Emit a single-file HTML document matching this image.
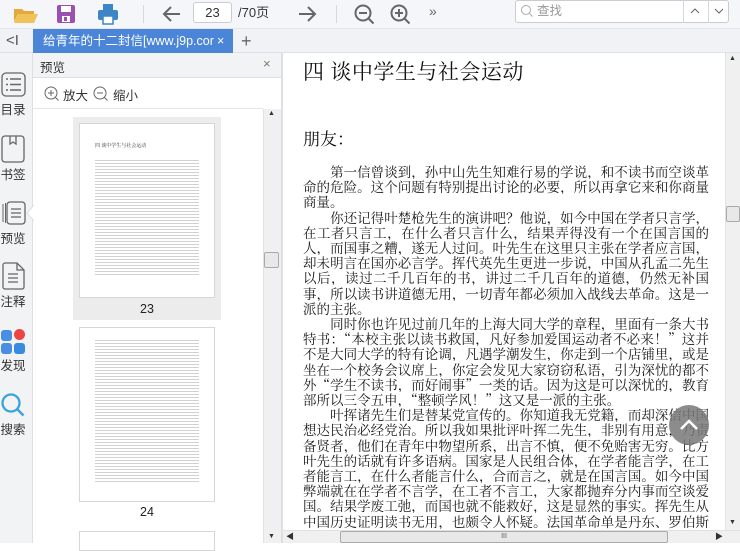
<!DOCTYPE html>
<html><head><meta charset="utf-8"><style>
*{margin:0;padding:0;box-sizing:border-box}
body{width:740px;height:543px;overflow:hidden;background:#fff;font-family:"Liberation Sans","Noto Sans CJK SC",sans-serif;position:relative}
.a{position:absolute}
.tb{left:0;top:0;width:740px;height:29px;background:#f4f6f9;border-bottom:1px solid #e3e6ea}
.tabbar{left:0;top:29px;width:740px;height:24px;background:#f0f2f5;border-bottom:1px solid #dde0e4}
.side{left:0;top:53px;width:33px;height:490px;background:#f2f3f5;border-right:1px solid #dcdfe3}
.lbl{font-size:12.5px;color:#333;left:0;width:26px;text-align:center}
.doc{font-family:"Noto Serif CJK SC","Liberation Serif",serif;color:#111}
.ln{position:absolute;left:303px;width:406px;font-size:13.5px;line-height:15.2px;white-space:nowrap;text-align:justify;text-align-last:justify;font-family:"Noto Serif CJK SC","Liberation Serif",serif;color:#1a1a1a;overflow:hidden}
.ln.s{text-align-last:left}
.th{background:#fff;border:1px solid #d6d6d6}
</style></head><body>
<div class="a tb"></div>
<svg class="a" style="left:12px;top:4px" width="26" height="20"><path d="M2 5h8l2 2h10v3H6L2 18z" fill="#e3a93a"/><path d="M6 10h20l-4 9H2z" fill="#f2c25a"/></svg>
<svg class="a" style="left:56px;top:4px" width="20" height="20"><rect x="1" y="1" width="18" height="18" rx="2" fill="#9b4fb0"/><rect x="5" y="2" width="10" height="6" fill="#fff"/><rect x="6" y="12" width="8" height="6" fill="#fff"/><rect x="8" y="13" width="3" height="4" fill="#9b4fb0"/></svg>
<svg class="a" style="left:97px;top:3px" width="22" height="22"><rect x="6" y="1" width="10" height="6" fill="#3d85c6"/><rect x="1" y="7" width="20" height="10" rx="2" fill="#3d85c6"/><rect x="6" y="13" width="10" height="8" fill="#fff" stroke="#3d85c6" stroke-width="1.5"/></svg>
<div class="a" style="left:143px;top:5px;width:1px;height:18px;background:#d5d8dc"></div>
<svg class="a" style="left:162px;top:4px" width="20" height="20"><path d="M18 10H3M9 3L2 10l7 7" stroke="#666" stroke-width="2" fill="none"/></svg>
<div class="a" style="left:193px;top:2px;width:39px;height:21px;border:1px solid #c9ccd0;border-radius:3px;background:#fff;font-size:13px;text-align:center;line-height:19px;color:#333">23</div>
<div class="a" style="left:238px;top:3px;font-size:13px;line-height:19px;color:#333">/70页</div>
<svg class="a" style="left:297px;top:4px" width="20" height="20"><path d="M2 10h15M11 3l7 7-7 7" stroke="#666" stroke-width="2" fill="none"/></svg>
<div class="a" style="left:336px;top:5px;width:1px;height:18px;background:#d5d8dc"></div>
<svg class="a" style="left:353px;top:3px" width="24" height="24"><circle cx="10" cy="10" r="7.5" stroke="#666" stroke-width="2" fill="none"/><path d="M6 10h8M15.5 15.5l5 5" stroke="#666" stroke-width="2"/></svg>
<svg class="a" style="left:389px;top:3px" width="24" height="24"><circle cx="10" cy="10" r="7.5" stroke="#666" stroke-width="2" fill="none"/><path d="M6 10h8M10 6v8M15.5 15.5l5 5" stroke="#666" stroke-width="2"/></svg>
<div class="a" style="left:429px;top:3px;font-size:14px;color:#666">»</div>
<div class="a" style="left:515px;top:0px;width:214px;height:23px;border:1px solid #c9ccd0;border-radius:3px;background:#fff"></div>
<svg class="a" style="left:520px;top:4px" width="14" height="14"><circle cx="6" cy="6" r="4.5" stroke="#aaa" fill="none"/><path d="M9.5 9.5l3 3" stroke="#aaa"/></svg>
<div class="a" style="left:537px;top:2px;font-size:12.5px;color:#999;line-height:19px">查找</div>
<div class="a" style="left:683px;top:0;width:1px;height:23px;background:#d5d8dc"></div>
<div class="a" style="left:708px;top:0;width:1px;height:23px;background:#d5d8dc"></div>
<svg class="a" style="left:690px;top:7px" width="10" height="8"><path d="M1 6l4-4 4 4" stroke="#666" fill="none"/></svg>
<svg class="a" style="left:714px;top:7px" width="10" height="8"><path d="M1 2l4 4 4-4" stroke="#666" fill="none"/></svg>

<div class="a tabbar"></div>
<div class="a" style="left:6px;top:31px;font-size:15px;color:#555;line-height:20px">&lt;I</div>
<div class="a" style="left:33px;top:29px;width:200px;height:24px;background:#4a85d8;color:#fff;font-size:12.5px;line-height:24px;padding-left:10px;white-space:nowrap;overflow:hidden">给青年的十二封信[www.j9p.cor <span style="position:absolute;left:184px">×</span></div>
<div class="a" style="left:241px;top:29px;font-size:18px;color:#666;line-height:24px">+</div>

<div class="a side"></div>
<svg class="a" style="left:1px;top:72px" width="26" height="26"><rect x="1" y="1" width="23" height="23" rx="4" stroke="#666" stroke-width="1.3" fill="none"/><path d="M5 7h2M9 7h11M5 12.5h2M9 12.5h11M5 18h2M9 18h11" stroke="#666" stroke-width="1.6"/></svg>
<div class="a lbl" style="top:99px">目录</div>
<svg class="a" style="left:1px;top:135px" width="26" height="28"><rect x="1" y="1" width="22" height="26" rx="3" stroke="#666" stroke-width="1.3" fill="none"/><path d="M9 1v8l3-2 3 2V1" stroke="#666" stroke-width="1.3" fill="none"/></svg>
<div class="a lbl" style="top:164px">书签</div>
<svg class="a" style="left:1px;top:199px" width="28" height="28"><path d="M2 23V5M4.5 24V4" stroke="#666" stroke-width="1"/><rect x="6" y="3" width="18" height="22" rx="3" stroke="#666" stroke-width="1.3" fill="#f2f3f5"/><path d="M10 10h10M10 14h10M10 18h10" stroke="#666" stroke-width="1.3"/></svg>
<svg class="a" style="left:26px;top:205px" width="8" height="16"><path d="M8 0L1 8l7 8" fill="#fff" stroke="#dcdfe3"/></svg>
<div class="a lbl" style="top:228px">预览</div>
<svg class="a" style="left:1px;top:262px" width="26" height="28"><path d="M4 1h12l7 7v17a2 2 0 0 1-2 2H4a2 2 0 0 1-2-2V3a2 2 0 0 1 2-2z" stroke="#666" stroke-width="1.3" fill="none"/><path d="M16 1v7h7M7 12h10M7 16h10M7 20h10" stroke="#666" stroke-width="1.3" fill="none"/></svg>
<div class="a lbl" style="top:291px">注释</div>
<div class="a" style="left:1px;top:330px;width:11px;height:11px;border-radius:3px;background:#4a8de4"></div>
<div class="a" style="left:14px;top:329px;width:11px;height:11px;border-radius:50%;background:#ee4444"></div>
<div class="a" style="left:1px;top:343px;width:11px;height:11px;border-radius:3px;background:#4a8de4"></div>
<div class="a" style="left:14px;top:343px;width:11px;height:11px;border-radius:3px;background:#3a8ae0"></div>
<div class="a lbl" style="top:355px">发现</div>
<svg class="a" style="left:0px;top:392px" width="28" height="28"><circle cx="11" cy="11" r="8.5" stroke="#3aa3dc" stroke-width="2.3" fill="none"/><path d="M17.5 17.5l6 6" stroke="#3aa3dc" stroke-width="2.5"/></svg>
<div class="a lbl" style="top:419px">搜索</div>

<div class="a" style="left:33px;top:53px;width:248px;height:25px;background:#f2f3f5;border-bottom:1px solid #dcdfe3"></div>
<div class="a" style="left:40px;top:57px;font-size:12.5px;color:#333">预览</div>
<div class="a" style="left:263px;top:56px;font-size:13px;color:#777">×</div>
<svg class="a" style="left:44px;top:86px" width="16" height="16"><circle cx="7" cy="7" r="6" stroke="#666" fill="none"/><path d="M4 7h6M7 4v6M11.5 11.5l3 3" stroke="#666"/></svg>
<div class="a" style="left:63px;top:85px;font-size:12.5px;color:#333">放大</div>
<svg class="a" style="left:93px;top:86px" width="16" height="16"><circle cx="7" cy="7" r="6" stroke="#666" fill="none"/><path d="M4 7h6M11.5 11.5l3 3" stroke="#666"/></svg>
<div class="a" style="left:113px;top:85px;font-size:12.5px;color:#333">缩小</div>
<div class="a" style="left:33px;top:108px;width:230px;height:1px;background:#e5e5e5"></div>
<div class="a" style="left:73px;top:117px;width:148px;height:203px;background:#ececec"></div>
<div class="a th" style="left:79px;top:123px;width:136px;height:175px"></div>
<div class="a" style="left:95px;top:142px;font-size:5px;color:#333;font-family:'Noto Serif CJK SC',serif">四 谈中学生与社会运动</div>
<div class="a" style="left:95px;top:160px;width:104px;height:115px;background:repeating-linear-gradient(#999 0 1px,#fff 1px 3px);opacity:.45"></div>
<div class="a" style="left:73px;top:302px;width:148px;text-align:center;font-size:12.5px;color:#222">23</div>
<div class="a th" style="left:79px;top:327px;width:136px;height:175px"></div>
<div class="a" style="left:95px;top:340px;width:104px;height:143px;background:repeating-linear-gradient(#999 0 1px,#fff 1px 3px);opacity:.45"></div>
<div class="a" style="left:73px;top:505px;width:148px;text-align:center;font-size:12.5px;color:#222">24</div>
<div class="a th" style="left:79px;top:531px;width:136px;height:20px"></div>
<div class="a" style="left:263px;top:109px;width:18px;height:434px;background:#f0f0f0;border-left:1px solid #e2e2e2"></div>
<div class="a" style="left:268px;top:110px;font-size:7px;color:#333">▲</div>
<div class="a" style="left:264px;top:252px;width:15px;height:16px;background:#e8e8e8;border:1px solid #aaa;border-radius:2px"></div>
<div class="a" style="left:268px;top:533px;font-size:7px;color:#333">▼</div>
<div class="a" style="left:281px;top:53px;width:2px;height:490px;background:#dcdfe3"></div>

<div class="a doc" style="left:303px;top:56px;font-size:21px;letter-spacing:.5px">四 谈中学生与社会运动</div>
<div class="a doc" style="left:303px;top:125px;font-size:17px">朋友：</div>
<div class="ln" style="top:164px">　　第一信曾谈到，孙中山先生知难行易的学说，和不读书而空谈革</div>
<div class="ln" style="top:179px">命的危险。这个问题有特别提出讨论的必要，所以再拿它来和你商量</div>
<div class="ln s" style="top:194px">商量。</div>
<div class="ln" style="top:210px">　　你还记得叶楚枪先生的演讲吧？他说，如今中国在学者只言学，</div>
<div class="ln" style="top:225px">在工者只言工，在什么者只言什么，结果弄得没有一个在国言国的</div>
<div class="ln" style="top:240px">人，而国事之糟，遂无人过问。叶先生在这里只主张在学者应言国，</div>
<div class="ln" style="top:255px">却未明言在国亦必言学。挥代英先生更进一步说，中国从孔孟二先生</div>
<div class="ln" style="top:270px">以后，读过二千几百年的书，讲过二千几百年的道德，仍然无补国</div>
<div class="ln" style="top:286px">事，所以读书讲道德无用，一切青年都必须加入战线去革命。这是一</div>
<div class="ln s" style="top:301px">派的主张。</div>
<div class="ln" style="top:316px">　　同时你也许见过前几年的上海大同大学的章程，里面有一条大书</div>
<div class="ln" style="top:331px">特书：“本校主张以读书救国，凡好参加爱国运动者不必来！”这并</div>
<div class="ln" style="top:346px">不是大同大学的特有论调，凡遇学潮发生，你走到一个店铺里，或是</div>
<div class="ln" style="top:362px">坐在一个校务会议席上，你定会发见大家窃窃私语，引为深忧的都不</div>
<div class="ln" style="top:377px">外“学生不读书，而好闹事”一类的话。因为这是可以深忧的，教育</div>
<div class="ln s" style="top:392px">部所以三令五申，“整顿学风！”这又是一派的主张。</div>
<div class="ln" style="top:407px">　　叶挥诸先生们是替某党宣传的。你知道我无党籍，而却深信中国</div>
<div class="ln" style="top:422px">想达民治必经党治。所以我如果批评叶挥二先生，非别有用意，乃责</div>
<div class="ln" style="top:438px">备贤者，他们在青年中物望所系，出言不慎，便不免贻害无穷。比方</div>
<div class="ln" style="top:453px">叶先生的话就有许多语病。国家是人民组合体，在学者能言学，在工</div>
<div class="ln" style="top:468px">者能言工，在什么者能言什么，合而言之，就是在国言国。如今中国</div>
<div class="ln" style="top:483px">弊端就在在学者不言学，在工者不言工，大家都抛弃分内事而空谈爱</div>
<div class="ln" style="top:498px">国。结果学废工弛，而国也就不能救好，这是显然的事实。挥先生从</div>
<div class="ln" style="top:514px">中国历史证明读书无用，也颇令人怀疑。法国革命单是丹东、罗伯斯</div>

<div class="a" style="left:669px;top:405px;width:40px;height:40px;border-radius:50%;background:rgba(120,120,120,.85)"></div>
<svg class="a" style="left:677px;top:413px" width="24" height="24"><path d="M4 16l8-8 8 8" stroke="#fff" stroke-width="2.5" fill="none"/></svg>

<div class="a" style="left:725px;top:53px;width:15px;height:477px;background:#f0f0f0;border-left:1px solid #e2e2e2"></div>
<div class="a" style="left:729px;top:55px;font-size:7px;color:#333">▲</div>
<div class="a" style="left:726px;top:206px;width:14px;height:16px;background:#e8e8e8;border:1px solid #aaa;border-radius:2px"></div>
<div class="a" style="left:729px;top:519px;font-size:7px;color:#333">▼</div>
<div class="a" style="left:283px;top:530px;width:457px;height:13px;background:#f0f0f0;border-top:1px solid #e2e2e2"></div>
<div class="a" style="left:286px;top:531px;font-size:8px;color:#333">◀</div>
<div class="a" style="left:340px;top:531px;width:328px;height:12px;background:#e8e8e8;border:1px solid #aaa;border-radius:2px;font-size:7px;text-align:center;line-height:10px;color:#555">III</div>
<div class="a" style="left:715px;top:531px;font-size:8px;color:#333">▶</div>
</body></html>
